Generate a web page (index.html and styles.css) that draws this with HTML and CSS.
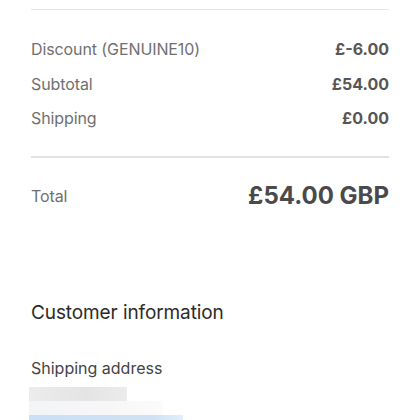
FILE: index.html
```html
<!DOCTYPE html>
<html lang="en">
<head>
  <meta charset="UTF-8" />
  <title>Order summary</title>
  <link rel="stylesheet" href="styles.css">
</head>
<body>
  <div class="page">
    <div class="rule"></div>

    <div class="lines">
      <div class="line">
        <span class="label">Discount (GENUINE10)</span>
        <span class="value">£-6.00</span>
      </div>
      <div class="line">
        <span class="label">Subtotal</span>
        <span class="value">£54.00</span>
      </div>
      <div class="line">
        <span class="label">Shipping</span>
        <span class="value">£0.00</span>
      </div>
    </div>

    <div class="rule thick"></div>

    <div class="total">
      <span class="label">Total</span>
      <span class="total-value">£54.00 GBP</span>
    </div>

    <h2 class="section-title">Customer information</h2>
    <h3 class="sub-title">Shipping address</h3>

    <div class="address">
      <div class="blur blur-name"></div>
      <div class="blur blur-line"></div>
      <div class="blur blur-blue"></div>
    </div>
  </div>
</body>
</html>
```

FILE: styles.css
```css
body {
  margin: 0;
  background: #fff;
  font-family: Inter, "Noto Sans", Arial, sans-serif;
  color: #333;
  overflow: hidden;
}

.page {
  padding: 9px 31px 0;
}

.rule {
  height: 1px;
  background: #e4e4e4;
}

.rule.thick {
  height: 2px;
  background: #e2e2e2;
}

.lines {
  padding: 22px 0 20px;
}

.line {
  display: flex;
  justify-content: space-between;
  align-items: center;
  height: 34.5px;
}

.label {
  font-size: 16px;
  color: #707070;
  letter-spacing: -0.1px;
}

.value {
  font-size: 16px;
  font-weight: 700;
  color: #565656;
}

.total {
  display: flex;
  justify-content: space-between;
  align-items: center;
  height: 40px;
  margin-top: 18px;
}

.total-value {
  font-size: 24px;
  font-weight: 700;
  color: #4a4a4a;
}

.section-title {
  margin: 85px 0 0;
  font-size: 19px;
  font-weight: 400;
  line-height: 24px;
  color: #2b2b2b;
  letter-spacing: -0.1px;
}

.sub-title {
  margin: 33px 0 0;
  font-size: 16px;
  font-weight: 400;
  line-height: 20px;
  color: #444;
}

.address {
  margin: 9px 0 0 -2px;
}

.blur {
  height: 14px;
}

.blur-name {
  width: 98px;
  background: linear-gradient(90deg, #ececec, #e4e4e4 60%, #ececec);
}

.blur-line {
  width: 134px;
  background: linear-gradient(90deg, #f3f4f6, #f7f7f8 60%, #fbfbfc);
}

.blur-blue {
  width: 154px;
  background: linear-gradient(90deg, #c9e0f6, #cde2f5 80%, #e3eefa);
}
```
